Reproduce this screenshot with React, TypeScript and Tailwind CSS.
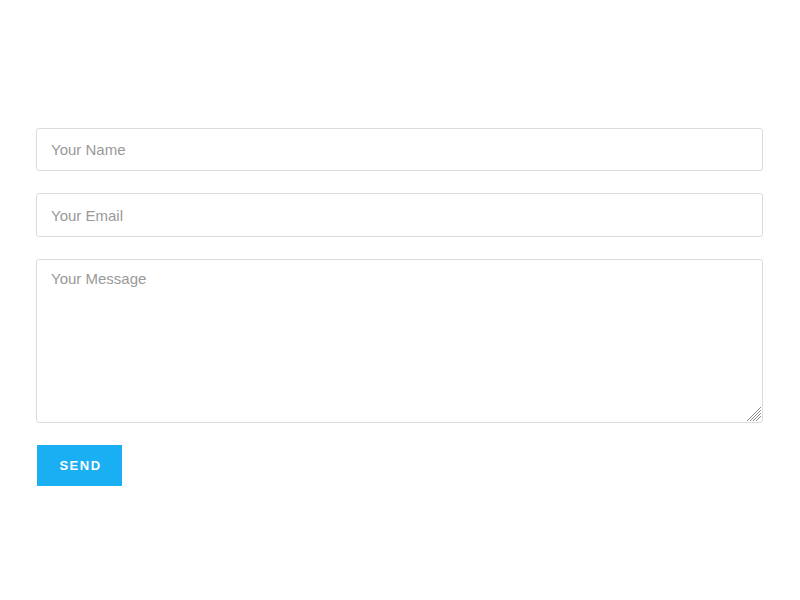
import React from "react";

export default function App() {
  return (
    <div className="w-[800px] h-[600px] bg-white" style={{ fontFamily: '"Liberation Sans", Arial, sans-serif' }}>
      <form className="flex flex-col pt-[128px] pl-[36px] pr-[37px]" onSubmit={(e) => e.preventDefault()}>
        <input
          type="text"
          placeholder="Your Name"
          className="h-[43px] w-full rounded-[3px] border border-[#dcdcdc] px-[14px] text-[15px] text-[#555] placeholder:text-[#999] outline-none"
        />
        <input
          type="email"
          placeholder="Your Email"
          className="mt-[22px] h-[44px] w-full rounded-[3px] border border-[#dcdcdc] px-[14px] text-[15px] text-[#555] placeholder:text-[#999] outline-none"
        />
        <div className="relative mt-[22px]">
          <textarea
            placeholder="Your Message"
            className="block h-[164px] w-full rounded-[3px] border border-[#dcdcdc] px-[14px] pt-[8px] text-[15px] text-[#555] placeholder:text-[#999] outline-none resize-none"
          />
          <svg
            className="pointer-events-none absolute right-[2px] bottom-[2px]"
            width="15"
            height="15"
            viewBox="0 0 15 15"
          >
            <g stroke="#8a8a8a" strokeWidth="1">
              <line x1="1" y1="15" x2="15" y2="1" />
              <line x1="4" y1="15" x2="15" y2="4" />
              <line x1="7" y1="15" x2="15" y2="7" />
              <line x1="10" y1="15" x2="15" y2="10" />
            </g>
          </svg>
        </div>
        <div className="mt-[22px] pl-[1px]">
          <button
            type="submit"
            className="h-[41px] w-[85px] bg-[#1aaef2] text-white text-[13px] font-bold tracking-[1.5px] uppercase pl-[2px] pt-[1px]"
          >
            Send
          </button>
        </div>
      </form>
    </div>
  );
}
